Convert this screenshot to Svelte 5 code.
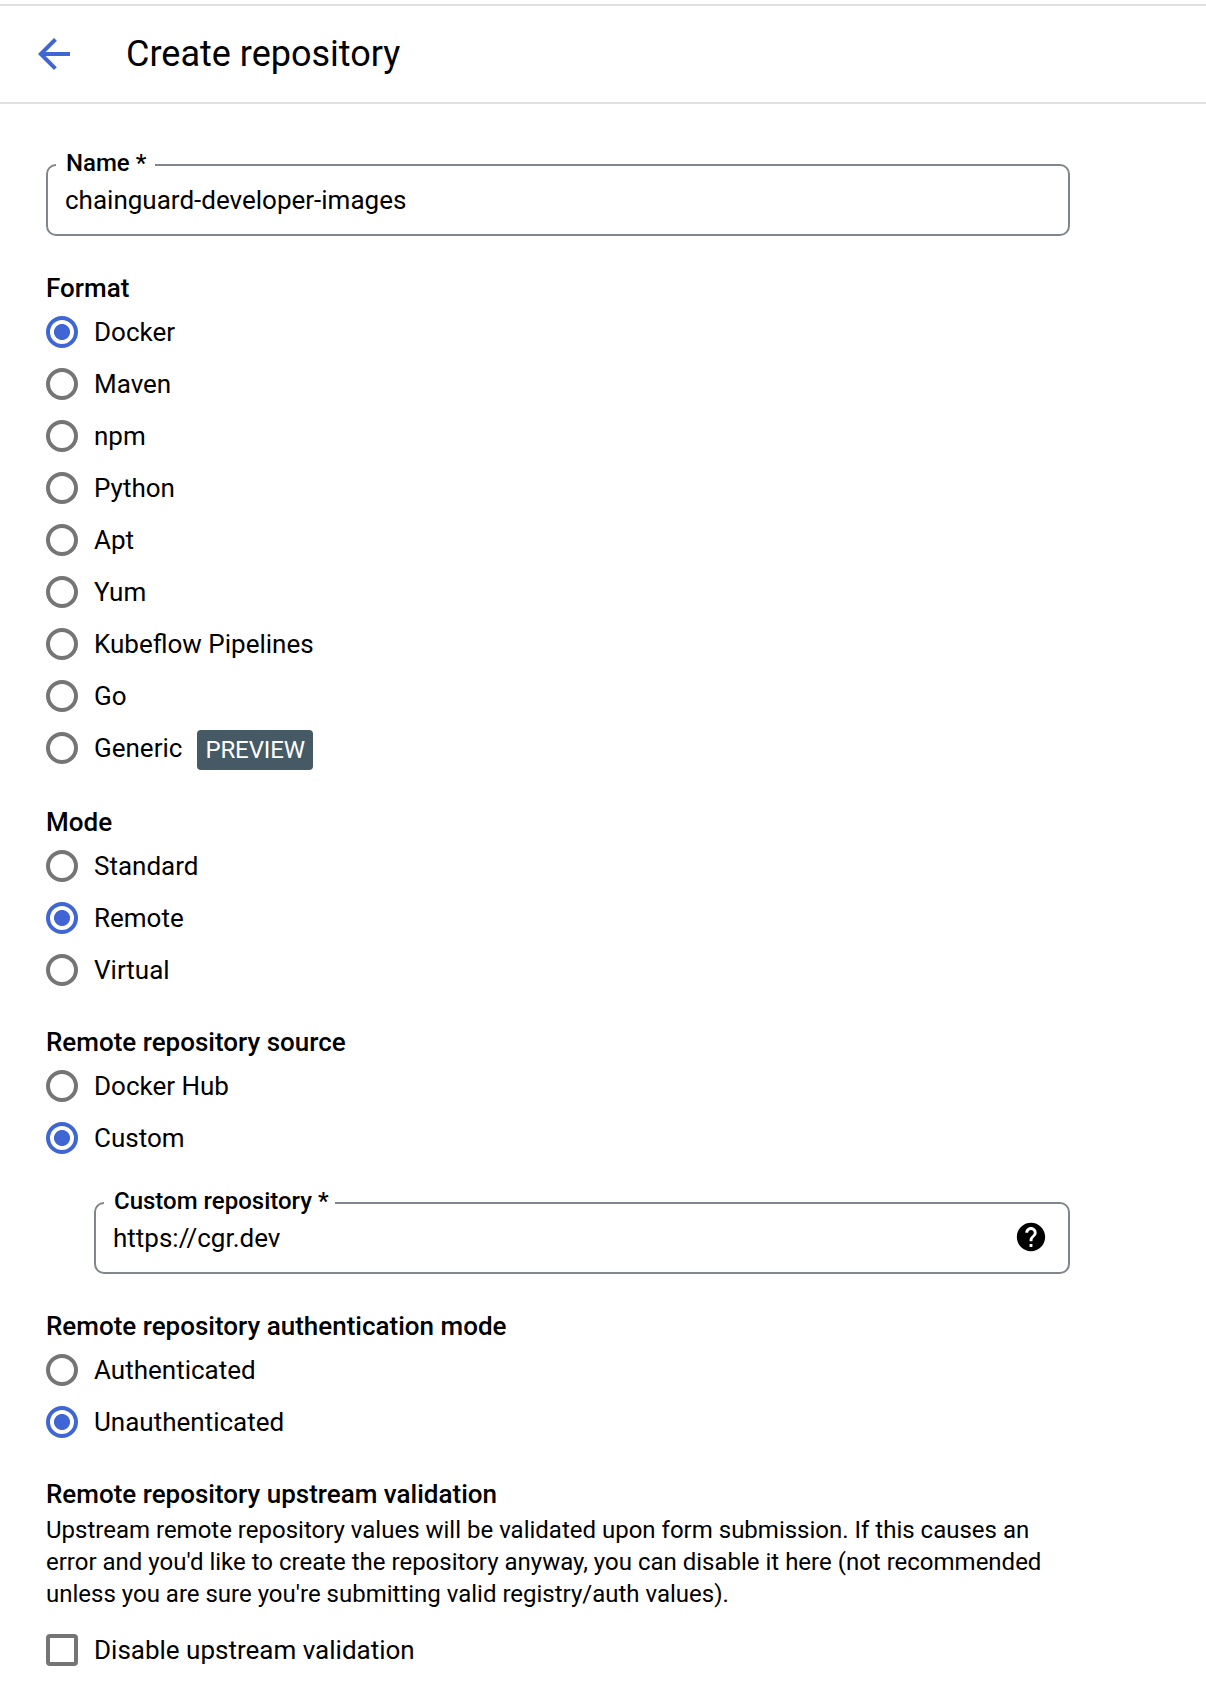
<script>
  const formats = ['Docker', 'Maven', 'npm', 'Python', 'Apt', 'Yum', 'Kubeflow Pipelines', 'Go', 'Generic'];
  const modes = ['Standard', 'Remote', 'Virtual'];
  const sources = ['Docker Hub', 'Custom'];
  const auths = ['Authenticated', 'Unauthenticated'];

  let format = $state('Docker');
  let mode = $state('Remote');
  let source = $state('Custom');
  let auth = $state('Unauthenticated');
</script>

{#snippet radios(options, value, pick)}
  {#each options as option}
    <label class="row">
      <input type="radio" checked={option === value} onchange={() => pick(option)} />
      <span>{option}</span>
      {#if option === 'Generic'}<span class="badge">PREVIEW</span>{/if}
    </label>
  {/each}
{/snippet}

<header>
  <svg class="back" viewBox="0 0 24 24"><path d="M20 11H7.83l5.59-5.59L12 4l-8 8 8 8 1.41-1.41L7.83 13H20v-2z" /></svg>
  <h1>Create repository</h1>
</header>

<main>
  <fieldset class="field">
    <legend>Name *</legend>
    <span class="value">chainguard-developer-images</span>
  </fieldset>

  <section class="format">
    <h2>Format</h2>
    {@render radios(formats, format, (v) => (format = v))}
  </section>

  <section class="mode">
    <h2>Mode</h2>
    {@render radios(modes, mode, (v) => (mode = v))}
  </section>

  <section>
    <h2>Remote repository source</h2>
    {@render radios(sources, source, (v) => (source = v))}
    <fieldset class="field nested">
      <legend>Custom repository *</legend>
      <span class="value">https://cgr.dev</span>
      <svg class="help" viewBox="0 0 24 24"><path d="M12 2C6.48 2 2 6.48 2 12s4.48 10 10 10 10-4.48 10-10S17.52 2 12 2zm1 17h-2v-2h2v2zm2.07-7.75l-.9.92C13.45 12.9 13 13.5 13 15h-2v-.5c0-1.1.45-2.1 1.17-2.83l1.24-1.26c.37-.36.59-.86.59-1.41 0-1.1-.9-2-2-2s-2 .9-2 2H8c0-2.21 1.79-4 4-4s4 1.79 4 4c0 .88-.36 1.68-.93 2.25z" /></svg>
    </fieldset>
  </section>

  <section class="auth">
    <h2>Remote repository authentication mode</h2>
    {@render radios(auths, auth, (v) => (auth = v))}
  </section>

  <section>
    <h2>Remote repository upstream validation</h2>
    <p>
      Upstream remote repository values will be validated upon form submission. If this causes an<br />
      error and you'd like to create the repository anyway, you can disable it here (not recommended<br />
      unless you are sure you're submitting valid registry/auth values).
    </p>
    <label class="row">
      <input type="checkbox" />
      <span>Disable upstream validation</span>
    </label>
  </section>
</main>

<style>
  :global(body) {
    background: #fff;
    color: #000;
    font-family: Roboto, sans-serif;
    font-size: 26px;
    line-height: 32px;
  }

  header {
    display: flex;
    align-items: center;
    gap: 48px;
    box-sizing: border-box;
    height: 100px;
    margin-top: 4px;
    padding-left: 30px;
    border-top: 2px solid #e0e0e0;
    border-bottom: 2px solid #e0e0e0;
  }

  .back {
    width: 48px;
    height: 48px;
    fill: #3f66d4;
  }

  h1 {
    margin: 0;
    font-size: 36px;
    font-weight: 400;
    line-height: 48px;
  }

  main {
    width: 1024px;
    padding: 44px 0 0 46px;
  }

  .field {
    display: flex;
    align-items: center;
    justify-content: space-between;
    box-sizing: border-box;
    height: 88px;
    min-width: 0;
    margin: 0;
    padding: 0 20px 16px 17px;
    border: 2px solid #80868b;
    border-radius: 10px;
  }

  .field legend {
    height: 34px;
    margin-left: -9px;
    padding: 0 9px 0 10px;
    font-size: 24px;
    font-weight: 500;
    line-height: 31px;
  }

  .nested {
    margin: 22px 0 0 48px;
  }

  .nested legend {
    padding-right: 6px;
  }

  .help {
    width: 34px;
    height: 34px;
    margin-bottom: 2px;
  }

  section {
    margin-top: 30px;
  }

  .format,
  .auth {
    margin-top: 36px;
  }

  .mode {
    margin-top: 32px;
  }

  h2 {
    margin: 0 0 2px;
    font-size: 26px;
    font-weight: 500;
    line-height: 32px;
  }

  .row {
    display: flex;
    align-items: center;
    height: 52px;
  }

  input {
    appearance: none;
    box-sizing: border-box;
    width: 32px;
    height: 32px;
    margin: 0 16px 0 0;
    border: 4px solid #757575;
    border-radius: 50%;
  }

  input[type='radio']:checked {
    border-color: #3f66d4;
    background: radial-gradient(circle, #3f66d4 7.6px, transparent 8.4px);
  }

  input[type='checkbox'] {
    border-radius: 4px;
  }

  .badge {
    box-sizing: border-box;
    width: 116px;
    height: 40px;
    margin: 4px 0 0 15px;
    padding: 0 8px;
    border-radius: 4px;
    background: #455a64;
    color: #fff;
    font-size: 24px;
    letter-spacing: -0.1px;
    line-height: 40px;
  }

  p {
    margin: 4px 0 14px;
    font-size: 24px;
    line-height: 32px;
    white-space: nowrap;
  }
</style>
